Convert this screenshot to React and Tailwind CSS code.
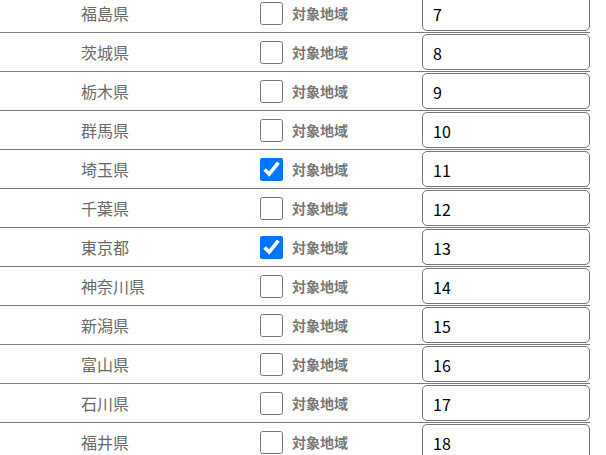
import React, { useState } from "react";

const PREFS = [
  { name: "福島県", id: 7, on: false },
  { name: "茨城県", id: 8, on: false },
  { name: "栃木県", id: 9, on: false },
  { name: "群馬県", id: 10, on: false },
  { name: "埼玉県", id: 11, on: true },
  { name: "千葉県", id: 12, on: false },
  { name: "東京都", id: 13, on: true },
  { name: "神奈川県", id: 14, on: false },
  { name: "新潟県", id: 15, on: false },
  { name: "富山県", id: 16, on: false },
  { name: "石川県", id: 17, on: false },
  { name: "福井県", id: 18, on: false },
];

function PrefRow({ pref }) {
  const [checked, setChecked] = useState(pref.on);
  const [value, setValue] = useState(String(pref.id));

  return (
    <div className="flex items-center w-[590px] h-[39px] border-b border-[#7a7a7a] py-px">
      <div className="w-[260px] pl-[81px] text-[16px] text-[#6a6a6a]">
        {pref.name}
      </div>
      <label className="flex items-center gap-[9px] cursor-pointer">
        <input
          type="checkbox"
          checked={checked}
          onChange={(e) => setChecked(e.target.checked)}
          className="w-[23px] h-[23px] m-0"
        />
        <span className="text-[14px] font-bold text-[#777]">対象地域</span>
      </label>
      <input
        type="text"
        value={value}
        onChange={(e) => setValue(e.target.value)}
        className="ml-auto w-[168px] h-[36px] border border-[#767676] rounded-[5px] px-[10px] pt-px text-[16px] text-black bg-white outline-none"
      />
    </div>
  );
}

export default function App() {
  return (
    <div
      className="w-[606px] h-[455px] overflow-hidden bg-white"
      style={{ fontFamily: '"Noto Sans CJK JP", "Noto Sans", sans-serif' }}
    >
      {/* list is scrolled a little, first row cut at top */}
      <div className="-mt-[6px]">
        {PREFS.map((p) => (
          <PrefRow key={p.id} pref={p} />
        ))}
      </div>
    </div>
  );
}
